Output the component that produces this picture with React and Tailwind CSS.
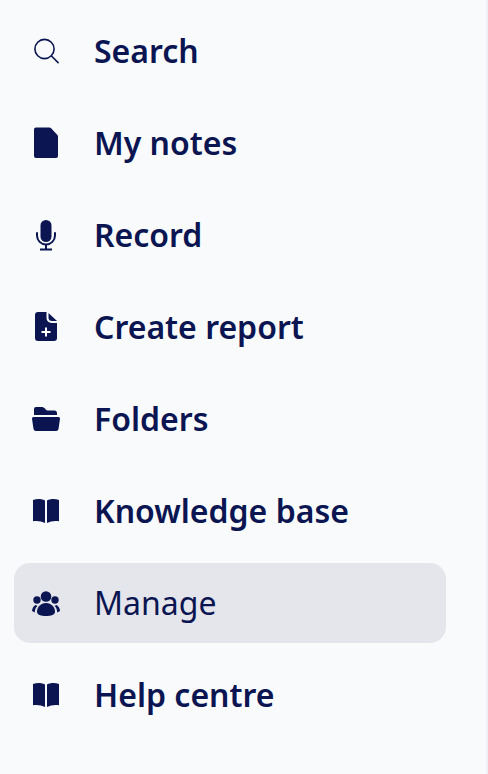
const C = "#0a1551";

const Search = () => (
  <svg width="28" height="28" viewBox="0 0 28 28" fill="none" stroke={C} strokeWidth="1.6">
    <circle cx="12.500" cy="12" r="9.600" />
    <path d="M19.500 19l6.600 6.600" strokeLinecap="round" />
  </svg>
);
const Note = () => (
  <svg width="28" height="32" viewBox="0 0 28 32" fill={C}>
    <path d="M4 0.500h13.500a2 2 0 0 1 1.400.6l6.500 7a2 2 0 0 1 .6 1.400V29a2 2 0 0 1-2 2H4a2 2 0 0 1-2-2V2.500a2 2 0 0 1 2-2z" />
  </svg>
);
const Mic = () => (
  <svg width="28" height="32" viewBox="0 0 28 32">
    <rect x="8.500" y="1" width="11" height="22" rx="5.500" fill={C} />
    <path d="M5 14v2.500a9 9 0 0 0 18 0V14" fill="none" stroke={C} strokeWidth="2" strokeLinecap="round" />
    <path d="M14 25v5M8 30.500h12" fill="none" stroke={C} strokeWidth="2" />
  </svg>
);
const Report = () => (
  <svg width="28" height="32" viewBox="0 0 28 32">
    <path fill={C} d="M6 1h8.500v6a5 5 0 0 0 5 5H25v15a3 3 0 0 1-3 3H6a3 3 0 0 1-3-3V4a3 3 0 0 1 3-3z" />
    <path fill={C} d="M16.500 2l8.500 8h-5a3.500 3.500 0 0 1-3.500-3.500z" />
    <path d="M14 16.500v9M9.500 21h9" stroke="#fff" strokeWidth="2" />
  </svg>
);
const Folder = () => (
  <svg width="30" height="28" viewBox="0 0 30 28" fill={C}>
    <path d="M5 2h6c1.500 0 2.500 1 3.500 2.200C15.300 5 16 5.500 17 5.500h6.500C25 5.500 26 6.500 26 8v2H3V4a2 2 0 0 1 2-2z" />
    <path d="M2.500 12h25a1.500 1.500 0 0 1 1.500 1.700L27.500 24a2.500 2.500 0 0 1-2.500 2H5a2.500 2.500 0 0 1-2.500-2L1 13.700A1.500 1.500 0 0 1 2.500 12z" />
  </svg>
);
const Book = () => (
  <svg width="28" height="26" viewBox="0 0 28 26" fill={C}>
    <path d="M1 2C5 .5 9.500 .5 13 2.500V25C9.500 23 5 22.500 1 23.200z" />
    <path d="M27 2C23 .5 18.500 .5 15 2.500V25c3.500-2 8-2.500 12-1.800z" />
  </svg>
);
const People = () => (
  <svg width="30" height="28" viewBox="0 0 30 28" fill={C}>
    <circle cx="15" cy="7.500" r="5.300" />
    <circle cx="6" cy="11" r="3.700" />
    <circle cx="24" cy="11" r="3.700" />
    <path d="M15 14c5.500 0 9 4.500 9 8.500 0 3.500-4 4.500-9 4.500s-9-1-9-4.500c0-4 3.500-8.500 9-8.500z" />
    <path d="M4.500 16C2.500 17 1 19.500 1 22l2.800 1.500c0-2.500.7-5 2.700-6.500zM25.500 16c2 1 3.500 3.500 3.500 6l-2.800 1.500c0-2.500-.7-5-2.700-6.500z" />
  </svg>
);

const items = [
  ["Search", Search],
  ["My notes", Note],
  ["Record", Mic],
  ["Create report", Report],
  ["Folders", Folder],
  ["Knowledge base", Book],
  ["Manage", People, true],
  ["Help centre", Book],
];

export default function App() {
  return (
    <div className="w-[488px] h-[774px] bg-[#f9fafc] border-r-2 border-[#eef0f6] pt-[11px] pl-[14px] pr-10 flex flex-col gap-3 font-['Noto_Sans',sans-serif] text-[#0a1551]">
      {items.map(([label, Icon, active]) => (
        <div
          key={label}
          className={`h-20 shrink-0 flex items-center rounded-2xl ${active ? "bg-[#e5e6eb]" : ""}`}
        >
          <div className="w-20 pr-4 flex justify-center">
            <Icon />
          </div>
          <span className={`text-[32px] leading-10 ${active ? "font-normal" : "font-semibold"}`}>{label}</span>
        </div>
      ))}
    </div>
  );
}
